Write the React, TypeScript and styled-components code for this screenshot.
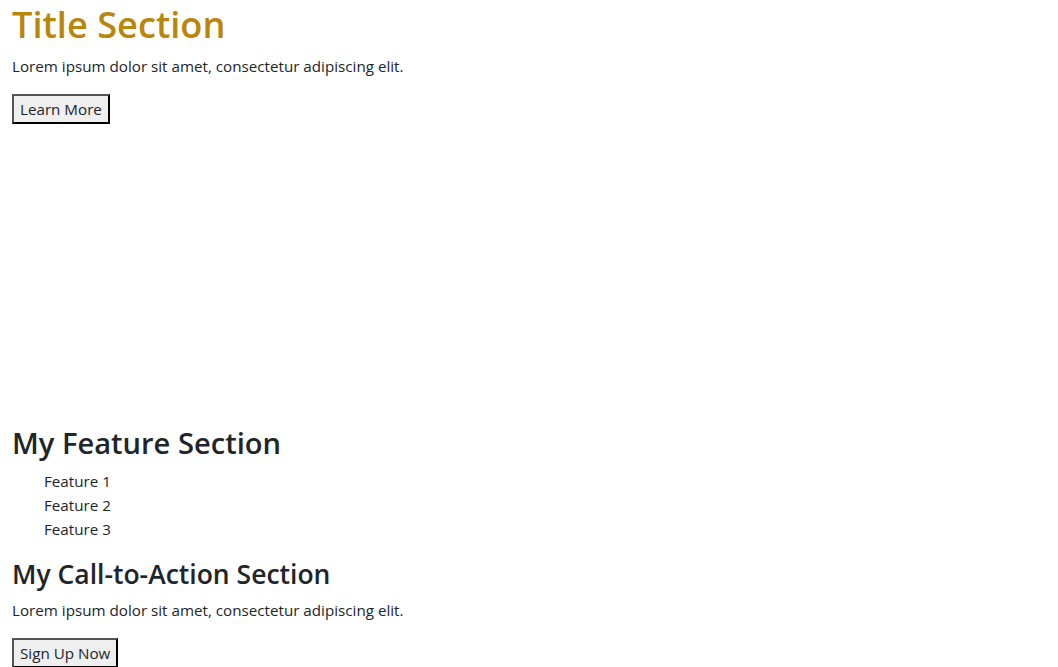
import styled, { createGlobalStyle } from "styled-components";

const GlobalStyle = createGlobalStyle`
  *, *::before, *::after {
    box-sizing: border-box;
  }

  body {
    margin: 0;
    background: #fff;
    color: #212529;
    font-family: "Open Sans", "Noto Sans", "Liberation Sans", sans-serif;
    font-size: 15.2px;
    line-height: 24px;
  }
`;

export default function App() {
  return <>
    <GlobalStyle/>
    <Container>
      <Hero>
        <Title>Title Section</Title>
        <Text>Lorem ipsum dolor sit amet, consectetur adipiscing elit.</Text>
        <Button>Learn More</Button>
      </Hero>
      <section>
        <FeatureHeading>My Feature Section</FeatureHeading>
        <Features>
          {["Feature 1", "Feature 2", "Feature 3"].map(f => <li key={f}>{f}</li>)}
        </Features>
      </section>
      <section>
        <CtaHeading>My Call-to-Action Section</CtaHeading>
        <Text>Lorem ipsum dolor sit amet, consectetur adipiscing elit.</Text>
        <Button>Sign Up Now</Button>
      </section>
    </Container>
  </>
}

const Container = styled.main`
  padding: 1px 12px 0;
`;

const Hero = styled.section`
  min-height: 423px;
`;

// headings sit a touch lower in their line box than the fallback font puts them
const Title = styled.h1`
  margin: 0 0 8px;
  padding-top: 2px;
  font-size: 36.2px;
  font-weight: 600;
  line-height: 43.4px;
  color: #b8860b;
`;

const FeatureHeading = styled.h2`
  margin: 0 0 8px;
  padding-top: 2px;
  font-size: 29.1px;
  font-weight: 600;
  line-height: 34.9px;
`;

const CtaHeading = styled.h3`
  margin: 0 0 8px;
  padding-top: 2px;
  font-size: 26.5px;
  font-weight: 600;
  line-height: 30.6px;
`;

const Text = styled.p`
  margin: 0 0 16px;
`;

const Features = styled.ul`
  list-style: none;
  margin: 0 0 16px;
  padding-left: 32px;
`;

const Button = styled.button`
  display: inline-block;
  margin: 0;
  padding: 1px 6px;
  font: inherit;
  color: #212529;
  background: #efefef;
  border: 2px outset #000;
  border-radius: 0;
`;
